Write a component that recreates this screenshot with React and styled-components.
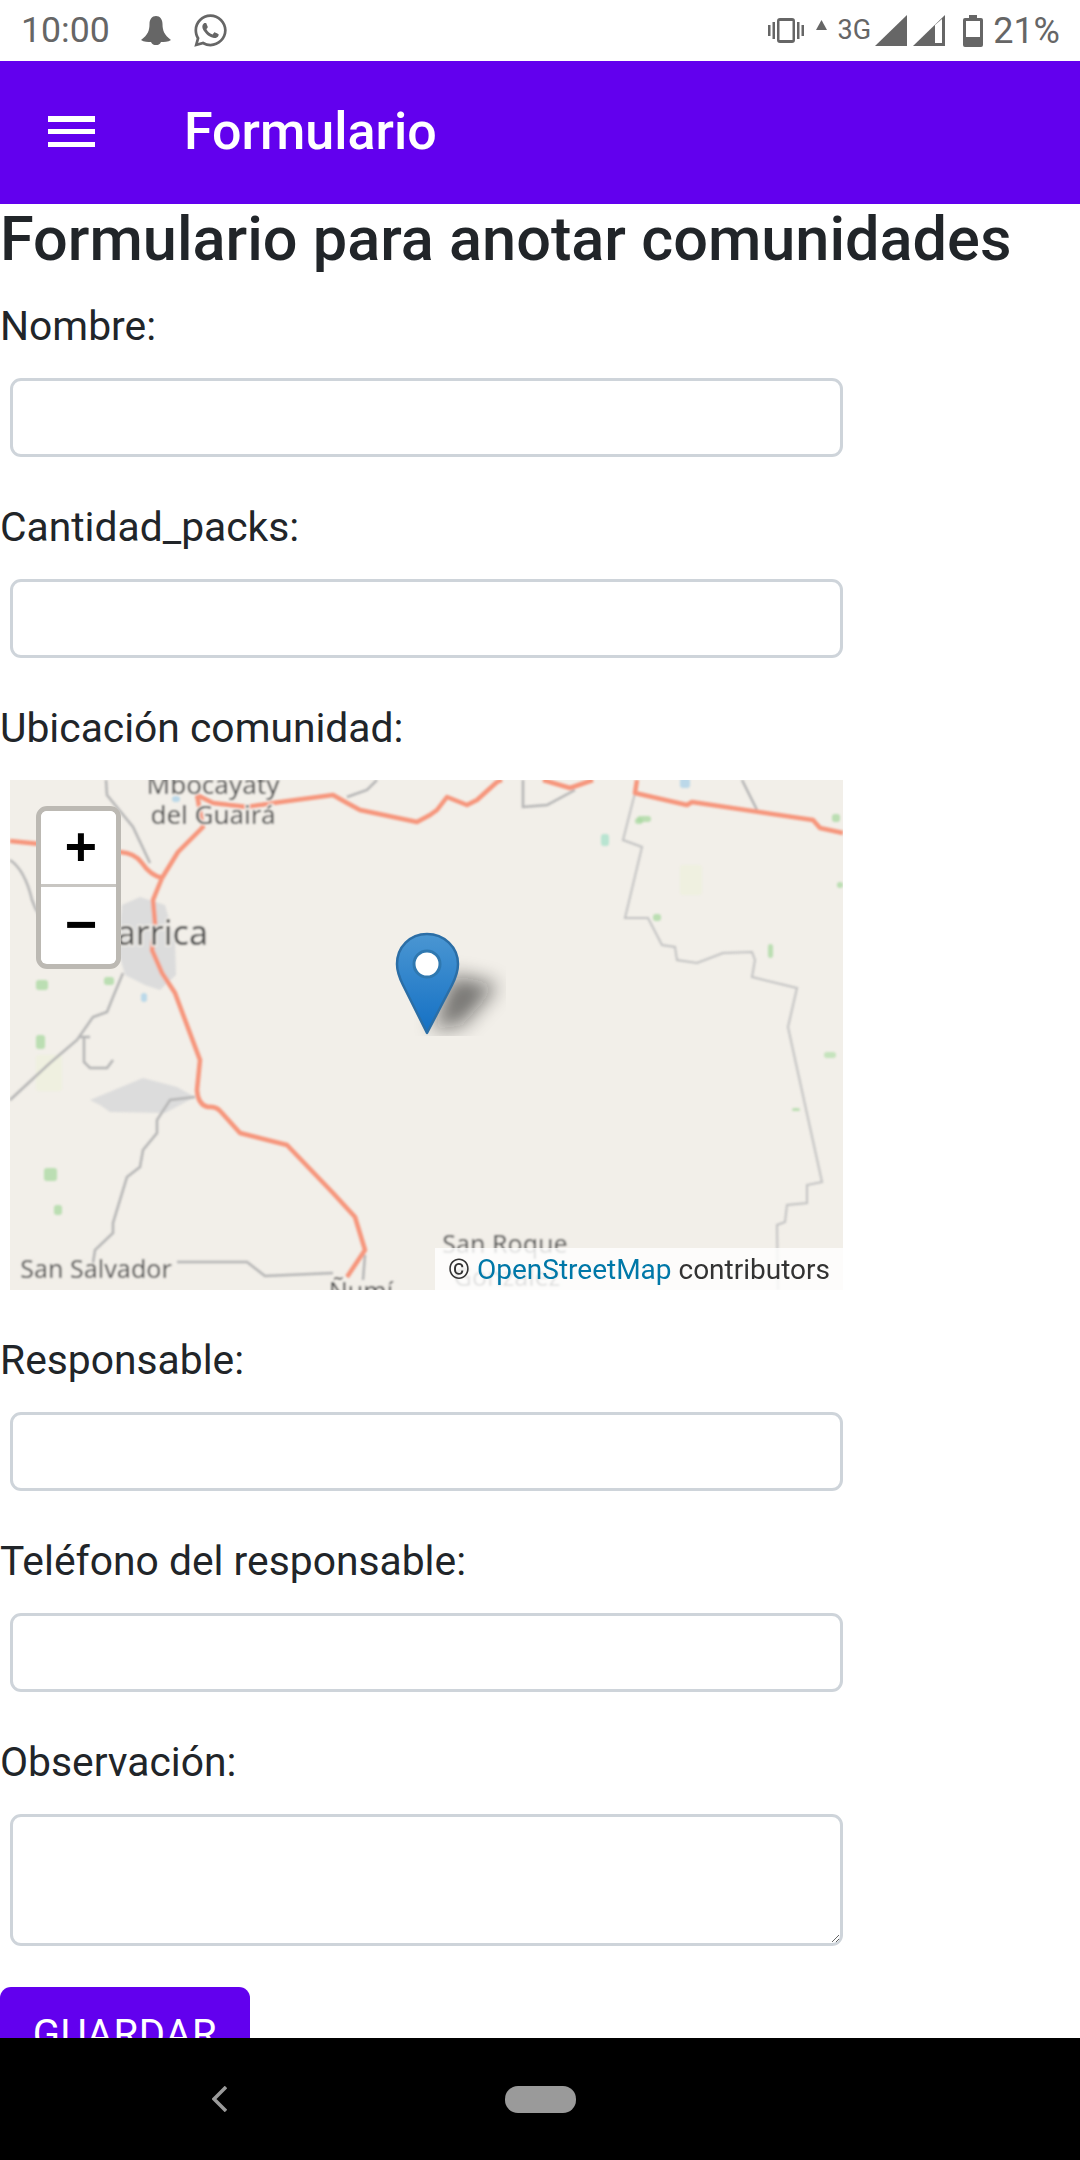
import React from "react";
import styled, { createGlobalStyle } from "styled-components";
import { FaWhatsapp } from "react-icons/fa";

const GlobalStyle = createGlobalStyle`
  html, body {
    margin: 0;
    padding: 0;
    background: #fff;
    font-family: Roboto, "Liberation Sans", sans-serif;
  }
  * {
    box-sizing: border-box;
  }
`;

const Screen = styled.div`
  width: 1080px;
  height: 2160px;
  display: flex;
  flex-direction: column;
  overflow: hidden;
`;

const StatusBar = styled.div`
  height: 61px;
  flex: none;
  display: flex;
  align-items: center;
  justify-content: space-between;
  padding: 0 20px 0 21px;
  background: #fff;
  color: #666;
`;

const StatusGroup = styled.div`
  display: flex;
  align-items: center;
`;

const StatusText = styled.span`
  font-size: ${(p) => p.$size || 36}px;
  line-height: 1;
  margin-left: ${(p) => p.$gap || 0}px;
`;

const StatusIcon = styled.svg`
  display: block;
  flex: none;
  fill: #666;
  margin-left: ${(p) => p.$gap || 0}px;
  margin-top: ${(p) => p.$top || 0}px;
`;

const WhatsappIcon = styled(FaWhatsapp)`
  display: block;
  margin-left: 21px;
  color: #666;
`;

const AppBar = styled.header`
  height: 143px;
  flex: none;
  display: flex;
  align-items: center;
  padding: 0 0 2px 48px;
  background: #6200ee;
  color: #fff;
`;

const MenuIcon = styled.svg`
  display: block;
  fill: #fff;
`;

const AppTitle = styled.h1`
  margin: 0 0 0 89px;
  font-size: 52px;
  font-weight: 500;
  line-height: 1;
`;

const Content = styled.main`
  flex: 1;
  min-height: 0;
  overflow: hidden;
  background: #fff;
  color: #212529;
`;

const Heading = styled.h3`
  margin: 0 0 23px;
  font-size: 61.25px;
  font-weight: 500;
  line-height: 70px;
  white-space: nowrap;
`;

const Field = styled.div`
  margin-bottom: 41px;
`;

const Label = styled.label`
  display: block;
  margin-bottom: 23px;
  font-size: 40.8px;
  line-height: 58px;
`;

const Input = styled.input`
  display: block;
  width: 833px;
  height: 79px;
  margin-left: 10px;
  border: 3px solid #ced4da;
  border-radius: 11px;
  background: #fff;
  outline: none;
`;

const TextArea = styled.textarea`
  display: block;
  width: 833px;
  height: 132px;
  margin-left: 10px;
  border: 3px solid #ced4da;
  border-radius: 11px;
  background: #fff;
  outline: none;
`;

const MapBox = styled.div`
  position: relative;
  width: 833px;
  height: 510px;
  margin-left: 10px;
  overflow: hidden;
  background: #f2efe9;
`;

const MapDrawing = styled.svg`
  display: block;
`;

const ZoomControl = styled.div`
  position: absolute;
  left: 26px;
  top: 26px;
  width: 85px;
  height: 163px;
  border: 5px solid #bcb9b3;
  border-radius: 11px;
  overflow: hidden;
  background: #fff;
`;

const ZoomButton = styled.div`
  height: 76px;
  display: flex;
  align-items: center;
  justify-content: center;
  padding: 0 0 5px 5px;
  background: #fff;
  color: #000;
  font-family: "DejaVu Sans Mono", monospace;
  font-size: 52px;
  font-weight: 700;
  line-height: 1;
  border-bottom: ${(p) => (p.$divider ? "3px solid #c8c6c2" : "none")};
`;

const Attribution = styled.div`
  position: absolute;
  right: 0;
  bottom: 0;
  height: 42px;
  padding: 0 13px;
  display: flex;
  align-items: center;
  white-space: pre;
  background: rgba(255, 255, 255, 0.8);
  color: #333;
  font-size: 28px;
`;

const MapLink = styled.span`
  color: #0078a8;
`;

const SaveButton = styled.button`
  display: block;
  width: 250px;
  height: 94px;
  padding: 0;
  border: none;
  border-radius: 11px;
  background: #6200ee;
  color: #fff;
  font-family: Roboto, sans-serif;
  font-size: 40px;
  font-weight: 400;
  letter-spacing: 0.6px;
  text-transform: uppercase;
`;

const NavBar = styled.nav`
  height: 122px;
  flex: none;
  display: flex;
  align-items: center;
  padding-left: 212px;
  background: #000;
`;

const BackIcon = styled.svg`
  display: block;
  fill: none;
  stroke: #9a9a9a;
  stroke-width: 3.5;
`;

const HomePill = styled.div`
  width: 71px;
  height: 27px;
  margin-left: 278px;
  border-radius: 13px;
  background: #9a9a9a;
`;

// coordenadas de pagina, el viewBox del mapa las recorta
const motorways = [
  "M10 841 L40 844 L120 852 Q135 853 142 863 Q150 875 162 878",
  "M162 878 L178 852 L203 827 L197 795 L213 803 L247 807 L273 803 L333 795 Q345 802 360 810 L417 822 L430 815 L437 810 L447 797 L467 805 L477 800 L497 782 L502 780",
  "M543 780 L570 788 L593 780",
  "M637 780 L635 793 L687 805 L692 802 L813 820 L820 828 L843 833",
  "M162 878 L153 900 L155 923 L152 950 L162 973 L175 993 L200 1060 L197 1090 Q198 1105 208 1107 Q217 1106 222 1113 L240 1133 L287 1145 L333 1193 L355 1217 L365 1250 L347 1277",
];

const minorRoads = [
  "M10 860 Q25 870 32 900 Q38 918 50 925",
  "M106 780 L107 795 L133 827 L150 863",
  "M123 973 L113 997 L107 1012 L93 1017 L77 1040 L50 1063 L10 1100",
  "M80 1037 L90 1037 M84 1037 L84 1062 L90 1068 L107 1068 L113 1060",
  "M195 1097 L170 1100 L157 1120 L157 1133 L143 1150 L140 1167 L127 1177 L113 1223 L113 1233 L95 1250 L93 1263",
  "M177 1262 L247 1262 L265 1276 L333 1273",
  "M365 1255 L363 1280",
  "M377 780 L367 790 L347 797",
  "M523 780 L523 807 L547 805 L575 790",
  "M742 780 L757 810",
];

const borderLine =
  "M635 793 L623 840 L642 847 L625 918 L648 918 L662 945 L675 947 L677 960 L697 963 L723 953 L752 952 L755 960 L752 977 L797 988 L788 1027 L793 1050 L822 1182 L807 1185 L807 1203 L787 1205 L785 1222 L777 1225 L778 1290";

const patches = [
  { x: 36, y: 980, w: 12, h: 10, c: "#a8d8a0" },
  { x: 104, y: 977, w: 10, h: 8, c: "#a8d8a0" },
  { x: 36, y: 1035, w: 9, h: 14, c: "#a8d8a0" },
  { x: 44, y: 1168, w: 13, h: 13, c: "#a8d8a0" },
  { x: 54, y: 1205, w: 8, h: 10, c: "#a8d8a0" },
  { x: 601, y: 834, w: 8, h: 12, c: "#a6e0c8" },
  { x: 637, y: 816, w: 14, h: 6, c: "#a8d8a0" },
  { x: 635, y: 818, w: 8, h: 6, c: "#a8d8a0" },
  { x: 653, y: 914, w: 8, h: 7, c: "#a8d8a0" },
  { x: 768, y: 944, w: 5, h: 14, c: "#a8d8a0" },
  { x: 832, y: 814, w: 8, h: 8, c: "#a8d8a0" },
  { x: 837, y: 882, w: 6, h: 6, c: "#a8d8a0" },
  { x: 824, y: 1052, w: 12, h: 6, c: "#b6dfae" },
  { x: 792, y: 1108, w: 8, h: 3, c: "#a8d8a0" },
  { x: 680, y: 865, w: 22, h: 30, c: "#eef0dc" },
  { x: 36, y: 1055, w: 26, h: 36, c: "#eef0dc" },
  { x: 172, y: 796, w: 8, h: 6, c: "#a8d0e8" },
  { x: 141, y: 993, w: 6, h: 9, c: "#a8d0e8" },
  { x: 680, y: 778, w: 10, h: 10, c: "#a8d0e8" },
];

const placeLabels = [
  { text: "Mbocayaty", x: 213, y: 794, size: 26 },
  { text: "del Guairá", x: 213, y: 824, size: 26 },
  { text: "Villarrica", x: 139, y: 945, size: 34 },
  { text: "San Salvador", x: 96, y: 1278, size: 25 },
  { text: "San Roque", x: 505, y: 1253, size: 25 },
  { text: "González", x: 507, y: 1286, size: 25 },
  { text: "Ñumí", x: 361, y: 1300, size: 25 },
];

const AreaMap = () => (
  <MapDrawing width="833" height="510" viewBox="10 780 833 510">
    <defs>
      <filter id="soft" x="-5%" y="-5%" width="110%" height="110%">
        <feGaussianBlur stdDeviation="0.9" />
      </filter>
      <filter id="shadowBlur" x="-80%" y="-80%" width="260%" height="260%">
        <feGaussianBlur stdDeviation="10" />
      </filter>
      <clipPath id="shadowClip">
        <rect x="396" y="940" width="110" height="96" />
      </clipPath>
      <linearGradient id="pinFill" x1="0" y1="0" x2="0" y2="1">
        <stop offset="0" stopColor="#4a96d2" />
        <stop offset="1" stopColor="#1470c4" />
      </linearGradient>
    </defs>
    <g filter="url(#soft)">
      <path d="M122 905 L140 897 L165 905 L175 940 L176 975 L160 990 L145 985 L125 975 L118 950Z" fill="#dcdcdc" />
      <path d="M90 1100 L143 1078 L177 1087 L195 1097 L165 1113 L110 1112 L100 1105Z" fill="#dcdcdc" />
      {patches.map((p) => (
        <rect key={`${p.x}-${p.y}`} x={p.x} y={p.y} width={p.w} height={p.h} rx="3" fill={p.c} opacity="0.75" />
      ))}
      {minorRoads.map((d) => (
        <path key={d} d={d} fill="none" stroke="#b5b5b5" strokeWidth="2.5" />
      ))}
      <path d={borderLine} fill="none" stroke="#c2c2c2" strokeWidth="2" />
      {motorways.map((d) => (
        <path key={d} d={d} fill="none" stroke="#f6957c" strokeWidth="4.5" strokeLinejoin="round" />
      ))}
      {placeLabels.map((l) => (
        <text
          key={l.text}
          x={l.x}
          y={l.y}
          textAnchor="middle"
          fontFamily="'Noto Sans', sans-serif"
          fontSize={l.size}
          fill="#4a4a4a"
          stroke="#f2efe9"
          strokeWidth="3"
          paintOrder="stroke"
        >
          {l.text}
        </text>
      ))}
    </g>
    <g clipPath="url(#shadowClip)">
      <path
        d="M432 1030 L452 975 L498 985 L462 1025Z"
        fill="#111"
        opacity="0.55"
        filter="url(#shadowBlur)"
      />
    </g>
    <path
      d="M427 1033 L403 985 C399 977 397 971 397 964 C397 947 410 934 427 934 C444 934 458 947 458 964 C458 971 456 977 452 985Z"
      fill="url(#pinFill)"
      stroke="#2b6ea6"
      strokeWidth="2.5"
      strokeLinejoin="round"
    />
    <circle cx="427" cy="964" r="13" fill="#fff" stroke="#2f78b0" strokeWidth="3" />
  </MapDrawing>
);

const App = () => (
  <Screen>
    <GlobalStyle />
    <StatusBar>
      <StatusGroup>
        <StatusText $size={35.7}>10:00</StatusText>
        <StatusIcon $gap={31} width="30" height="29" viewBox="0 0 30 29">
          <path d="M15 0 C11 0 8.5 3.5 8.5 8 C8.5 14 7 19 0 24 C3 26 7 26 10 26 C11 28.5 13 29 15 29 C17 29 19 28.5 20 26 C23 26 27 26 30 24 C23 19 21.5 14 21.5 8 C21.5 3.5 19 0 15 0Z" />
        </StatusIcon>
        <WhatsappIcon size={37} />
      </StatusGroup>
      <StatusGroup>
        <StatusIcon width="36" height="25" viewBox="0 0 36 25">
          <rect x="0" y="7" width="2.5" height="11" />
          <rect x="4.5" y="4" width="2.5" height="17" />
          <path fillRule="evenodd" d="M12 0 H24 Q27 0 27 3 V22 Q27 25 24 25 H12 Q9 25 9 22 V3 Q9 0 12 0Z M11.5 3 V22 H24.5 V3Z" />
          <rect x="29" y="4" width="2.5" height="17" />
          <rect x="33.5" y="7" width="2.5" height="11" />
        </StatusIcon>
        <StatusIcon $gap={12} $top={-12} width="11" height="10" viewBox="0 0 11 10">
          <polygon points="5.5,0 11,10 0,10" />
        </StatusIcon>
        <StatusText $size={27} $gap={11}>3G</StatusText>
        <StatusIcon $gap={4} width="32" height="31" viewBox="0 0 32 31">
          <polygon points="0,31 32,0 32,31" />
        </StatusIcon>
        <StatusIcon $gap={6} width="32" height="31" viewBox="0 0 32 31">
          <polygon points="0,31 32,0 32,31" />
          <polygon points="22,10 29,4 29,28 22,28" fill="#fff" />
        </StatusIcon>
        <StatusIcon $gap={18} width="20" height="32" viewBox="0 0 20 32">
          <path fillRule="evenodd" d="M6 0 H14 V3 H18 Q20 3 20 5 V30 Q20 32 18 32 H2 Q0 32 0 30 V5 Q0 3 2 3 H6Z M3 6 V22 H17 V6Z" />
        </StatusIcon>
        <StatusText $gap={10}>21%</StatusText>
      </StatusGroup>
    </StatusBar>
    <AppBar>
      <MenuIcon width="47" height="31" viewBox="0 0 47 31">
        <rect y="0" width="47" height="6" />
        <rect y="13" width="47" height="5" />
        <rect y="26" width="47" height="5" />
      </MenuIcon>
      <AppTitle>Formulario</AppTitle>
    </AppBar>
    <Content>
      <Heading>Formulario para anotar comunidades</Heading>
      <Field>
        <Label>Nombre:</Label>
        <Input />
      </Field>
      <Field>
        <Label>Cantidad_packs:</Label>
        <Input />
      </Field>
      <Field>
        <Label>Ubicación comunidad:</Label>
        <MapBox>
          <AreaMap />
          <ZoomControl>
            <ZoomButton $divider>+</ZoomButton>
            <ZoomButton>−</ZoomButton>
          </ZoomControl>
          <Attribution>
            © <MapLink>OpenStreetMap</MapLink> contributors
          </Attribution>
        </MapBox>
      </Field>
      <Field>
        <Label>Responsable:</Label>
        <Input />
      </Field>
      <Field>
        <Label>Teléfono del responsable:</Label>
        <Input />
      </Field>
      <Field>
        <Label>Observación:</Label>
        <TextArea />
      </Field>
      <SaveButton>Guardar</SaveButton>
    </Content>
    <NavBar>
      <BackIcon width="15" height="26" viewBox="0 0 15 26">
        <polyline points="14,1 2,13 14,25" />
      </BackIcon>
      <HomePill />
    </NavBar>
  </Screen>
);

export default App;
